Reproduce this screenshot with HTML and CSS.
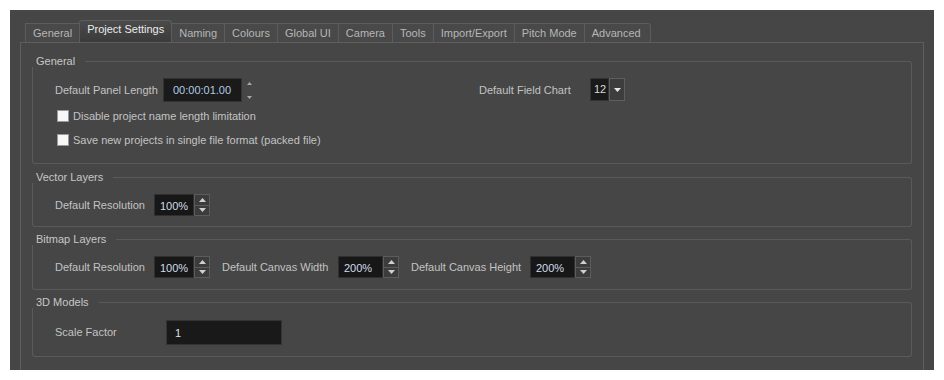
FILE: index.html
```html
<!DOCTYPE html>
<html>
<head>
<meta charset="utf-8">
<link rel="stylesheet" href="styles.css">
</head>
<body>
<div class="window">
  <div class="tabs">
    <div class="tab first">General</div>
    <div class="tab active">Project Settings</div>
    <div class="tab">Naming</div>
    <div class="tab">Colours</div>
    <div class="tab">Global UI</div>
    <div class="tab">Camera</div>
    <div class="tab">Tools</div>
    <div class="tab">Import/Export</div>
    <div class="tab">Pitch Mode</div>
    <div class="tab last">Advanced</div>
  </div>
  <div class="pane">
    <div class="group">
      <div class="group-head"><span class="group-title">General</span><span class="group-line"></span></div>
      <div class="group-body body-general">
        <div class="row row-first">
          <div class="cell cell-left">
            <span class="label w-panel">Default Panel Length</span>
            <div class="timeedit">00:00:01.00</div>
            <div class="mini-spin">
              <svg width="5" height="3" viewBox="0 0 5 3"><polygon points="0,3 5,3 2.5,0" fill="#a8a8a8"/></svg>
              <svg width="5" height="3" viewBox="0 0 5 3"><polygon points="0,0 5,0 2.5,3" fill="#a8a8a8"/></svg>
            </div>
          </div>
          <div class="cell">
            <span class="label w-chart">Default Field Chart</span>
            <div class="combo">
              <span class="combo-val">12</span>
              <span class="combo-btn"><svg width="7" height="4" viewBox="0 0 7 4"><polygon points="0,0 7,0 3.5,4" fill="#e8e8e8"/></svg></span>
            </div>
          </div>
        </div>
        <div class="row check-row"><span class="checkbox"></span><span class="label">Disable project name length limitation</span></div>
        <div class="row check-row"><span class="checkbox"></span><span class="label">Save new projects in single file format (packed file)</span></div>
      </div>
    </div>

    <div class="group group-vector">
      <div class="group-head"><span class="group-title">Vector Layers</span><span class="group-line"></span></div>
      <div class="group-body body-std">
        <div class="row row-spin">
          <span class="label w-res">Default Resolution</span>
          <div class="spin">
            <span class="spin-field f-100">100%</span>
            <span class="spin-btns">
              <span class="spin-btn"><svg width="7" height="4" viewBox="0 0 7 4"><polygon points="0,4 7,4 3.5,0" fill="#cfcfcf"/></svg></span>
              <span class="spin-btn"><svg width="7" height="4" viewBox="0 0 7 4"><polygon points="0,0 7,0 3.5,4" fill="#cfcfcf"/></svg></span>
            </span>
          </div>
        </div>
      </div>
    </div>

    <div class="group">
      <div class="group-head"><span class="group-title">Bitmap Layers</span><span class="group-line"></span></div>
      <div class="group-body body-std body-bitmap">
        <div class="row row-spin">
          <span class="label w-res">Default Resolution</span>
          <div class="spin">
            <span class="spin-field f-100">100%</span>
            <span class="spin-btns">
              <span class="spin-btn"><svg width="7" height="4" viewBox="0 0 7 4"><polygon points="0,4 7,4 3.5,0" fill="#cfcfcf"/></svg></span>
              <span class="spin-btn"><svg width="7" height="4" viewBox="0 0 7 4"><polygon points="0,0 7,0 3.5,4" fill="#cfcfcf"/></svg></span>
            </span>
          </div>
          <span class="label w-cw gap-l">Default Canvas Width</span>
          <div class="spin">
            <span class="spin-field f-200">200%</span>
            <span class="spin-btns">
              <span class="spin-btn"><svg width="7" height="4" viewBox="0 0 7 4"><polygon points="0,4 7,4 3.5,0" fill="#cfcfcf"/></svg></span>
              <span class="spin-btn"><svg width="7" height="4" viewBox="0 0 7 4"><polygon points="0,0 7,0 3.5,4" fill="#cfcfcf"/></svg></span>
            </span>
          </div>
          <span class="label w-ch gap-l">Default Canvas Height</span>
          <div class="spin">
            <span class="spin-field f-200">200%</span>
            <span class="spin-btns">
              <span class="spin-btn"><svg width="7" height="4" viewBox="0 0 7 4"><polygon points="0,4 7,4 3.5,0" fill="#cfcfcf"/></svg></span>
              <span class="spin-btn"><svg width="7" height="4" viewBox="0 0 7 4"><polygon points="0,0 7,0 3.5,4" fill="#cfcfcf"/></svg></span>
            </span>
          </div>
        </div>
      </div>
    </div>

    <div class="group">
      <div class="group-head"><span class="group-title">3D Models</span><span class="group-line"></span></div>
      <div class="group-body body-scale">
        <div class="row row-scale">
          <span class="label w-scale">Scale Factor</span>
          <div class="lineedit">1</div>
        </div>
      </div>
    </div>
  </div>
</div>
</body>
</html>
```

FILE: styles.css
```css
html, body {
  margin: 0;
  padding: 0;
  background: #ffffff;
}
body {
  font-family: "Liberation Sans", Arial, sans-serif;
  font-size: 11px;
  color: #c3c3c3;
}
.window {
  margin: 10px 10px 0 10px;
  width: 924px;
  height: 360px;
  background: #464646;
  overflow: hidden;
  padding: 10px 10px 0 10px;
  box-sizing: border-box;
}
.tabs {
  display: flex;
  align-items: flex-end;
  height: 22px;
  margin-left: 5px;
}
.tab {
  height: 19px;
  box-sizing: border-box;
  padding: 0 7px;
  line-height: 18px;
  color: #b6b6b6;
  background: #494949;
  border-top: 1px solid #5c5c5c;
  border-right: 1px solid #5c5c5c;
  white-space: nowrap;
}
.tab.first {
  border-left: 1px solid #5c5c5c;
}
.tab.last {
  border-top-right-radius: 3px;
  padding-right: 9px;
}
.tab.active {
  height: 22px;
  line-height: 17px;
  color: #ececec;
  background: linear-gradient(#4a4a4a, #3b3b3b);
  border-top-left-radius: 3px;
  border-top-right-radius: 3px;
  border-left: 1px solid #5c5c5c;
  margin-left: -1px;
}
.pane {
  border: 1px solid #5e5e5e;
  height: 400px;
  padding: 12px 11px 0 11px;
  box-sizing: border-box;
}
.group + .group {
  margin-top: 6px;
}
.group.group-vector {
  margin-top: 7px;
}
.group-head {
  display: flex;
  align-items: flex-end;
  height: 12px;
}
.group-title {
  line-height: 12px;
  margin-left: 4px;
  margin-right: 10px;
  color: #c6c6c6;
  white-space: nowrap;
}
.group-line {
  flex: 1;
  height: 6px;
  box-sizing: border-box;
  border-top: 1px solid #5a5a5a;
  border-right: 1px solid #5a5a5a;
  border-top-right-radius: 3px;
}
.group-body {
  border: 1px solid #5a5a5a;
  border-top: none;
  border-bottom-left-radius: 3px;
  border-bottom-right-radius: 3px;
  padding: 0 22px;
}
.body-general {
  padding-top: 11px;
  padding-bottom: 11px;
}
.body-std {
  padding-top: 10px;
  padding-bottom: 9px;
}
.body-std.body-bitmap {
  padding-bottom: 10px;
}
.body-scale {
  padding-top: 10px;
  padding-bottom: 10px;
}
.row {
  display: flex;
  align-items: center;
}
.row-first {
  height: 24px;
  margin-bottom: 2px;
}
.check-row {
  height: 24px;
}
.row-spin {
  height: 24px;
}
.row-scale {
  height: 28px;
}
.cell {
  display: flex;
  align-items: center;
}
.cell-left {
  width: 424px;
}
.label {
  white-space: nowrap;
}
.w-panel { width: 108px; }
.w-chart { width: 111px; }
.w-res { width: 99px; }
.w-cw { width: 116px; }
.w-ch { width: 119px; }
.w-scale { width: 111px; }
.gap-l { margin-left: 12px; }

.timeedit {
  width: 79px;
  height: 24px;
  box-sizing: border-box;
  background: #1a1a1a;
  border: 1px solid #333333;
  color: #b3cbe2;
  line-height: 22px;
  padding-left: 9px;
  font-size: 11px;
}
.mini-spin {
  display: flex;
  flex-direction: column;
  justify-content: space-between;
  height: 17px;
  margin-left: 5px;
}
.mini-spin svg { display: block; }

.combo {
  display: flex;
  height: 23px;
  margin-top: -1px;
}
.combo-val {
  width: 19px;
  box-sizing: border-box;
  background: #1a1a1a;
  border: 1px solid #333;
  color: #dcdcdc;
  line-height: 21px;
  padding-left: 3px;
  font-size: 11px;
}
.combo-btn {
  width: 16px;
  box-sizing: border-box;
  background: #3d3d3d;
  border: 1px solid #5e5e5e;
  display: flex;
  align-items: center;
  justify-content: center;
}
.combo-btn svg { display: block; }

.checkbox {
  width: 12px;
  height: 12px;
  box-sizing: border-box;
  background: #f7f7f7;
  border: 1px solid #9a9a9a;
  margin-left: 2px;
  margin-right: 4px;
}

.spin {
  display: flex;
  height: 22px;
}
.spin-field {
  box-sizing: border-box;
  background: #171717;
  border: 1px solid #2f2f2f;
  color: #d2dde9;
  line-height: 21px;
  padding-left: 5px;
  padding-top: 1px;
}
.f-100 { width: 40px; }
.f-200 { width: 45px; }
.spin-btns {
  display: flex;
  flex-direction: column;
  width: 16px;
}
.spin-btn {
  flex: 1;
  box-sizing: border-box;
  background: #3c3c3c;
  border: 1px solid #5c5c5c;
  display: flex;
  align-items: center;
  justify-content: center;
}
.spin-btn + .spin-btn { border-top: none; }
.spin-btn svg { display: block; }

.lineedit {
  width: 116px;
  height: 25px;
  box-sizing: border-box;
  background: #191919;
  border: 1px solid #333;
  color: #e0e0e0;
  line-height: 23px;
  padding-left: 8px;
  padding-top: 1px;
}
```
